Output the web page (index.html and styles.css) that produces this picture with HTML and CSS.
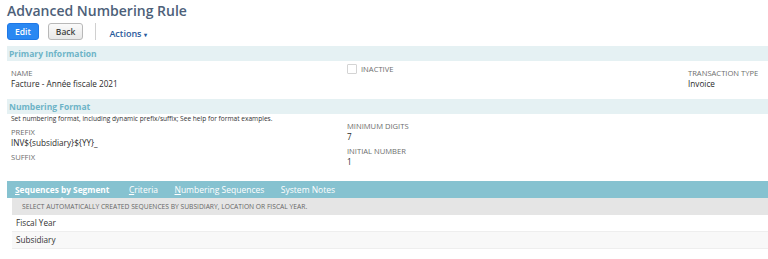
FILE: index.html
```html
<!DOCTYPE html>
<html lang="en">
<head>
  <meta charset="UTF-8">
  <title>Advanced Numbering Rule</title>
  <link rel="stylesheet" href="styles.css">
</head>
<body>

  <h1 class="page-title">Advanced Numbering Rule</h1>

  <div class="toolbar">
    <button class="btn btn-primary">Edit</button>
    <button class="btn">Back</button>
    <span class="toolbar-sep"></span>
    <span class="actions">Actions <span class="caret">&#9662;</span></span>
  </div>

  <div class="band">Primary Information</div>
  <div class="fields">
    <div class="field field-main">
      <div class="label">Name</div>
      <div class="value">Facture - Année fiscale 2021</div>
    </div>
    <div class="field">
      <label class="check"><span class="box"></span><span class="label">Inactive</span></label>
    </div>
    <div class="field field-main">
      <div class="label">Transaction Type</div>
      <div class="value">Invoice</div>
    </div>
  </div>

  <div class="band">Numbering Format</div>
  <div class="fields fields-format">
    <div class="field-col">
      <div class="help">Set numbering format, including dynamic prefix/suffix; See help for format examples.</div>
      <div class="field field-prefix">
        <div class="label">Prefix</div>
        <div class="value">INV${subsidiary}${YY}_</div>
      </div>
      <div class="field">
        <div class="label">Suffix</div>
      </div>
    </div>
    <div class="field-col field-col-right">
      <div class="field">
        <div class="label">Minimum Digits</div>
        <div class="value">7</div>
      </div>
      <div class="field">
        <div class="label">Initial Number</div>
        <div class="value">1</div>
      </div>
    </div>
  </div>

  <div class="tabs">
    <span class="tab active"><u>S</u>equences by Segment</span>
    <span class="tab"><u>C</u>riteria</span>
    <span class="tab"><u>N</u>umbering Sequences</span>
    <span class="tab">System Notes</span>
  </div>
  <div class="tab-body">
    <div class="sub-head">Select automatically created sequences by subsidiary, location or fiscal year.</div>
    <div class="row">Fiscal Year</div>
    <div class="row row-alt">Subsidiary</div>
  </div>

</body>
</html>
```

FILE: styles.css
```css
body {
  margin: 0;
  padding-left: 7px;
  font-family: "Open Sans", Arial, sans-serif;
  color: #333;
  background: #fff;
}

.page-title {
  margin: 0;
  height: 22px;
  font-size: 14px;
  font-weight: 600;
  color: #4d5f79;
  line-height: 21px;
}

.toolbar {
  display: flex;
  align-items: center;
  height: 24px;
  padding-bottom: 5px;
  box-sizing: border-box;
}

.btn {
  height: 17px;
  padding: 0 7px;
  margin-right: 9px;
  font-family: inherit;
  font-size: 8.5px;
  font-weight: 600;
  color: #444;
  border: 1px solid #b8b8b8;
  border-radius: 3px;
  background: linear-gradient(#fafafa, #e8e8e8);
}

.btn-primary {
  color: #fff;
  border-color: #1f78e6;
  background: #2a88f2;
}

.toolbar-sep {
  width: 1px;
  height: 17px;
  background: #d0d0d0;
  margin: 0 13px 0 3px;
}

.actions {
  font-size: 9px;
  font-weight: 600;
  color: #2a5a9c;
  padding-top: 4px;
}

.caret {
  font-size: 6px;
}

.band {
  height: 15px;
  padding-left: 2px;
  font-size: 8.5px;
  font-weight: 700;
  line-height: 15px;
  color: #6db4c7;
  background: #e5f1f3;
}

.fields {
  display: grid;
  grid-template-columns: 336px 341px 1fr;
  padding: 3px 0 0 4px;
  height: 38px;
  box-sizing: border-box;
}

.field-main {
  padding-top: 4px;
}

.label {
  font-size: 7.6px;
  text-transform: uppercase;
  color: #6e6e6e;
  line-height: 10px;
}

.value {
  font-size: 8.2px;
  color: #2b2b2b;
  line-height: 11px;
}

.check {
  display: flex;
  align-items: center;
  gap: 4px;
  height: 10px;
}

.box {
  width: 8px;
  height: 8px;
  border: 1px solid #d4d4d4;
  border-radius: 1px;
  background: #fff;
}

.fields-format {
  grid-template-columns: 336px 1fr;
  padding-top: 0;
  height: 67px;
}

.help {
  font-size: 6.6px;
  color: #333;
  line-height: 10px;
  white-space: nowrap;
}

.field-prefix {
  margin-top: 3px;
}

.field-col .field {
  margin-bottom: 4px;
}

.field-col-right {
  padding-top: 7px;
}

.tabs {
  display: flex;
  gap: 16.5px;
  height: 17px;
  padding-left: 8px;
  background: #86c2d0;
  align-items: center;
}

.tab {
  font-size: 8.5px;
  color: #fff;
}

.tab.active {
  font-size: 8.3px;
  font-weight: 700;
  margin-right: 3px;
  position: relative;
}

.tab.active::after {
  content: "";
  position: absolute;
  left: 44px;
  bottom: -5px;
  border: 3px solid transparent;
  border-bottom-color: #f2f2f2;
}

.tab-body {
  margin-left: 5px;
}

.sub-head {
  height: 17px;
  padding-left: 10px;
  font-size: 6.7px;
  line-height: 17px;
  text-transform: uppercase;
  color: #666;
  background: #e5e5e5;
}

.row {
  height: 16px;
  padding-left: 4px;
  font-size: 8.2px;
  line-height: 16px;
  border-bottom: 1px solid #eee;
}

.row-alt {
  background: #f8f8f8;
}
```
